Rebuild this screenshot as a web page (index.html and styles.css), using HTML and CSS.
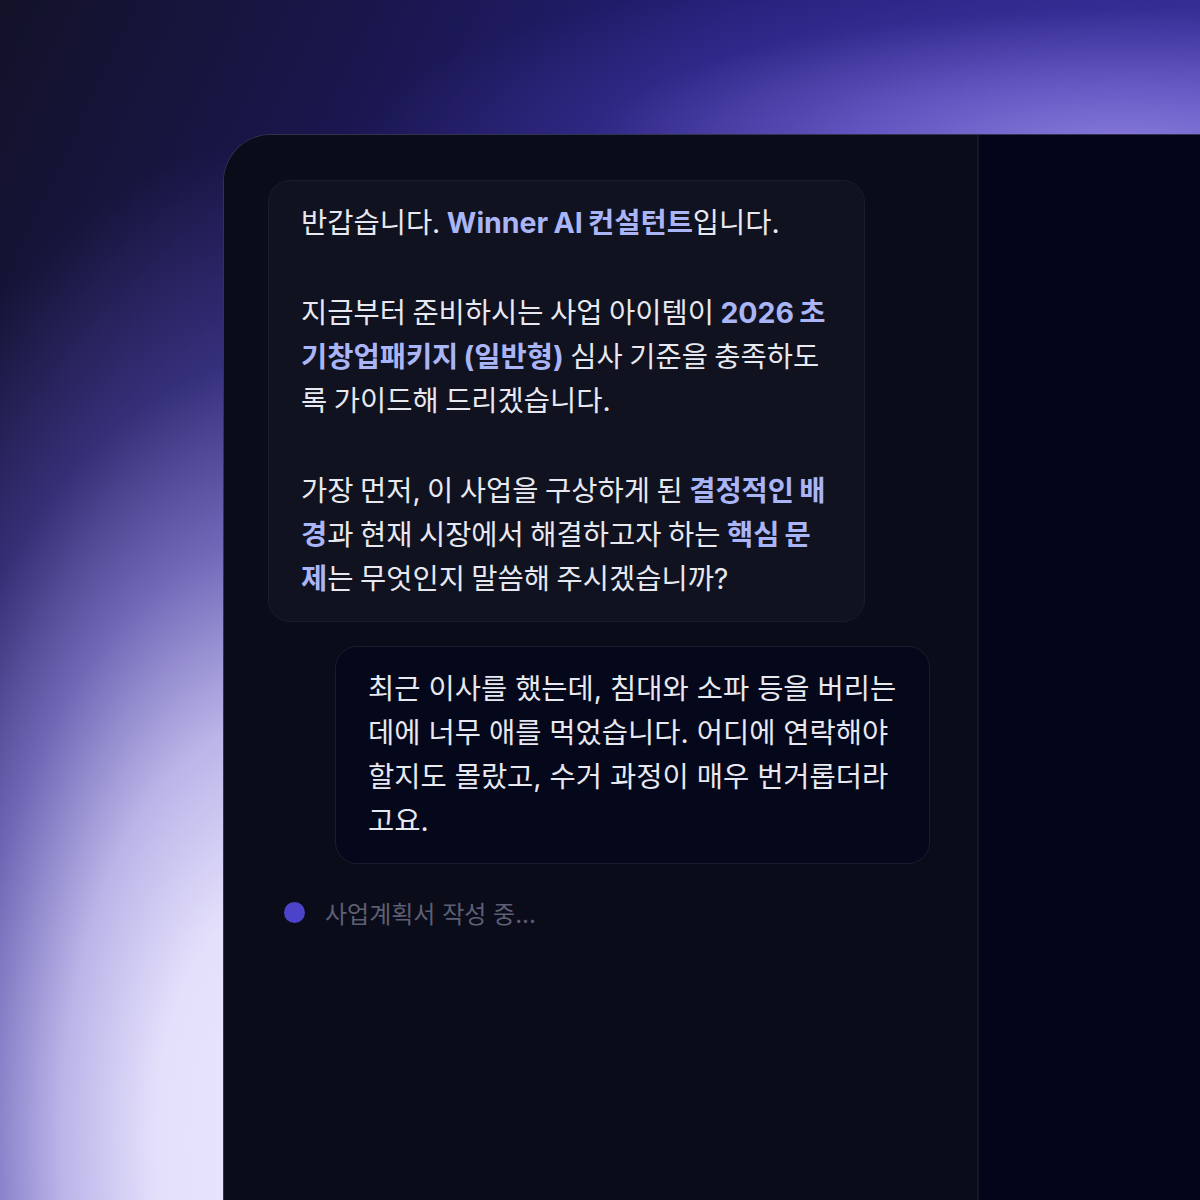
FILE: index.html
```html
<!DOCTYPE html>
<html lang="ko">
<head>
<meta charset="utf-8">
<title>Winner AI</title>
<link rel="stylesheet" href="styles.css">
</head>
<body>
<div class="stage">
  <div class="screen">
    <div class="chat">
      <div class="bubble ai">
        <p>반갑습니다. <b>Winner AI 컨설턴트</b>입니다.</p>
        <p>지금부터 준비하시는 사업 아이템이 <b>2026 초기창업패키지 (일반형)</b> 심사 기준을 충족하도록 가이드해 드리겠습니다.</p>
        <p>가장 먼저, 이 사업을 구상하게 된 <b>결정적인 배경</b>과 현재 시장에서 해결하고자 하는 <b>핵심 문제</b>는 무엇인지 말씀해 주시겠습니까?</p>
      </div>
      <div class="bubble user">
        <p>최근 이사를 했는데, 침대와 소파 등을 버리는 데에 너무 애를 먹었습니다. 어디에 연락해야 할지도 몰랐고, 수거 과정이 매우 번거롭더라고요.</p>
      </div>
      <div class="status">
        <span class="dot"></span>
        <span class="status-text">사업계획서 작성 중...</span>
      </div>
    </div>
    <div class="side"></div>
  </div>
</div>
</body>
</html>
```

FILE: styles.css
```css
* { box-sizing: border-box; }

html, body {
  margin: 0;
  padding: 0;
}

body {
  width: 1200px;
  height: 1200px;
  overflow: hidden;
  font-family: Inter, "Noto Sans CJK KR", "Noto Sans", sans-serif;
}

.stage {
  width: 1200px;
  height: 1200px;
  padding: 134px 0 0 223px;
  background:
    radial-gradient(ellipse 520px 1000px at 280px 1140px, #ebe6ff 0%, #e4e0fb 24%, rgba(200,194,244,0.92) 42%, rgba(150,140,226,0.7) 60%, rgba(100,90,200,0.38) 78%, rgba(70,60,170,0) 100%),
    radial-gradient(ellipse 760px 200px at 1120px 150px, #8a7ddc 0%, rgba(112,98,208,0.8) 35%, rgba(72,60,172,0.35) 70%, rgba(50,40,140,0) 100%),
    linear-gradient(115deg, #131229 0%, #19164a 20%, #241e76 42%, #2c2588 65%, #3a3098 100%);
}

.screen {
  display: flex;
  height: 1066px;
  border-top-left-radius: 48px;
  border-top: 1px solid rgba(170,170,210,0.28);
  border-left: 1px solid rgba(170,170,210,0.28);
  overflow: hidden;
  background: #05061a;
}

.chat {
  width: 755px;
  flex: none;
  display: flex;
  flex-direction: column;
  padding: 45px 47px 0 44px;
  background: #0b0c1a;
  border-right: 2px solid #141627;
}

.side {
  flex: 1;
  background: #04051a;
}

.bubble {
  border-radius: 22px;
  padding: 20px 32px;
  font-size: 28.5px;
  line-height: 44px;
  color: #e7e8f0;
}

.bubble p { margin: 0; }
.bubble p + p { margin-top: 46px; }

.bubble b {
  font-weight: 700;
  color: #aab5f7;
}

.ai {
  align-self: flex-start;
  width: 597px;
  background: #10121f;
  border: 1px solid #1a1c2b;
  word-spacing: -1.5px;
}

.user {
  align-self: flex-end;
  width: 595px;
  margin-top: 24px;
  background: #05071a;
  border: 1px solid #1b1d2d;
}

.status {
  display: flex;
  align-items: center;
  gap: 20px;
  margin-top: 33px;
  padding-left: 16px;
  height: 30px;
}

.dot {
  width: 21px;
  height: 21px;
  border-radius: 50%;
  background: #4b44c9;
  flex: none;
}

.status-text {
  font-size: 24px;
  color: #5d5f74;
}
```
